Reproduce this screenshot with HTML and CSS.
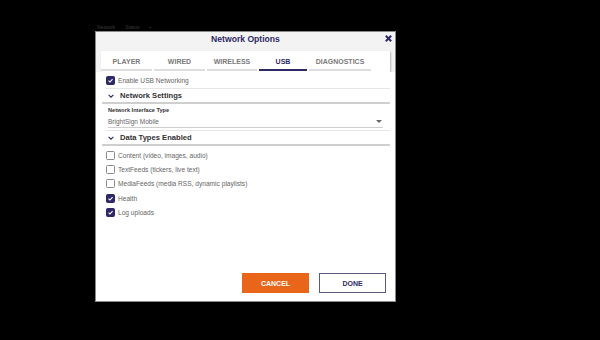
FILE: index.html
```html
<!DOCTYPE html>
<html>
<head>
<meta charset="utf-8">
<link rel="stylesheet" href="styles.css">
</head>
<body>
<div class="backdrop-strip"><span>Network</span><span>Status</span><span>▪</span></div>
<div class="dialog">
  <div class="head">
    <div class="title-row">
      <span class="title">Network Options</span>
      <svg class="close" viewBox="0 0 10 10"><path d="M2 2 L8 8 M8 2 L2 8" /></svg>
    </div>
    <div class="tabs">
      <div class="tab w1">PLAYER</div>
      <div class="tab w1">WIRED</div>
      <div class="tab w2">WIRELESS</div>
      <div class="tab w3 active">USB</div>
      <div class="tab w4">DIAGNOSTICS</div>
    </div>
  </div>
  <div class="content">
    <div class="check-row sep">
      <span class="box checked"><svg viewBox="0 0 10 10"><path d="M2.2 5.2 L4.2 7.2 L7.9 2.9" /></svg></span>
      <span>Enable USB Networking</span>
    </div>
    <div class="section">
      <svg class="chev" viewBox="0 0 10 6"><path d="M1 1 L5 5 L9 1" /></svg>
      <span>Network Settings</span>
    </div>
    <div class="field sep">
      <div class="field-label">Network Interface Type</div>
      <div class="select">
        <span>BrightSign Mobile</span>
        <span class="caret"></span>
      </div>
    </div>
    <div class="section">
      <svg class="chev" viewBox="0 0 10 6"><path d="M1 1 L5 5 L9 1" /></svg>
      <span>Data Types Enabled</span>
    </div>
    <div class="list">
      <div class="check-row"><span class="box"></span><span>Content (video, images, audio)</span></div>
      <div class="check-row"><span class="box"></span><span>TextFeeds (tickers, live text)</span></div>
      <div class="check-row"><span class="box"></span><span>MediaFeeds (media RSS, dynamic playlists)</span></div>
      <div class="check-row"><span class="box checked"><svg viewBox="0 0 10 10"><path d="M2.2 5.2 L4.2 7.2 L7.9 2.9" /></svg></span><span>Health</span></div>
      <div class="check-row"><span class="box checked"><svg viewBox="0 0 10 10"><path d="M2.2 5.2 L4.2 7.2 L7.9 2.9" /></svg></span><span>Log uploads</span></div>
    </div>
  </div>
  <div class="footer">
    <button class="btn cancel">CANCEL</button>
    <button class="btn done">DONE</button>
  </div>
</div>
</body>
</html>
```
FILE: styles.css
```css
html, body {
  margin: 0;
  padding: 0;
  background: #000;
}
body {
  width: 600px;
  height: 340px;
  overflow: hidden;
  padding: 24px 0 0 95px;
  box-sizing: border-box;
  font-family: "Liberation Sans", Arial, sans-serif;
}
.backdrop-strip {
  height: 7px;
  display: flex;
  gap: 10px;
  padding-left: 2px;
  font-size: 5px;
  line-height: 7px;
  color: #3a3a3a;
  overflow: hidden;
}
.dialog {
  width: 299px;
  height: 269px;
  border: 1px solid #8a8a8a;
  background: #fff;
  display: flex;
  flex-direction: column;
}
.head {
  background: #f3f3f3;
}
.title-row {
  height: 19px;
  display: flex;
  align-items: center;
  justify-content: center;
  position: relative;
}
.title {
  font-size: 8.6px;
  font-weight: bold;
  color: #2d2966;
  margin-top: -6px;
}
.close {
  position: absolute;
  right: 2px;
  top: 2px;
  width: 9px;
  height: 9px;
}
.close path {
  fill: none;
  stroke: #2d2966;
  stroke-width: 2.2;
}
.tabs {
  margin: 0 5px;
  height: 21px;
  background: #fff;
  display: flex;
  gap: 2px;
  align-items: stretch;
  box-shadow: 1px 1px 2px rgba(0,0,0,0.25);
  border-radius: 1px;
}
.tab {
  display: flex;
  align-items: center;
  justify-content: center;
  font-size: 7px;
  font-weight: bold;
  color: #7a7a7a;
  border-bottom: 2px solid #dedede;
  margin-bottom: 1px;
  padding-top: 2px;
  box-sizing: border-box;
}
.tab.w1 { width: 51px; }
.tab.w2 { width: 50px; }
.tab.w3 { width: 48px; }
.tab.w4 { width: 62px; }
.tab.active {
  color: #2d2966;
  border-bottom-color: #2d2966;
}
.content {
  padding: 1px 5px 0 10px;
  background: #fff;
}
.check-row {
  display: flex;
  align-items: center;
  gap: 3px;
  font-size: 6.6px;
  color: #666;
  height: 14.4px;
}
.check-row.sep {
  height: 15px;
  border-bottom: 1px solid #e6e6e6;
}
.box {
  width: 7px;
  height: 7px;
  border: 1px solid #8a8a8a;
  border-radius: 1.5px;
  background: #fff;
  display: flex;
  flex: none;
}
.box.checked {
  background: #2d2966;
  border-color: #2d2966;
}
.box svg {
  width: 7px;
  height: 7px;
}
.box svg path {
  fill: none;
  stroke: #fff;
  stroke-width: 1.6;
}
.section {
  height: 13px;
  display: flex;
  align-items: center;
  gap: 6px;
  border-bottom: 2px solid #cfcfcf;
  font-size: 7.6px;
  font-weight: bold;
  color: #333;
  margin-left: -4px;
  padding-left: 6px;
}
.chev {
  width: 6px;
  height: 4px;
}
.chev path {
  fill: none;
  stroke: #2d2966;
  stroke-width: 1.8;
}
.field {
  padding: 2px 7px 2px 2px;
}
.field.sep {
  border-bottom: 1px solid #e6e6e6;
}
.field-label {
  font-size: 5.6px;
  font-weight: bold;
  color: #333;
  height: 8px;
  line-height: 8px;
}
.select {
  display: flex;
  align-items: center;
  justify-content: space-between;
  height: 12px;
  margin-top: 1px;
  border-bottom: 1px solid #cfcfcf;
  font-size: 6.5px;
  color: #666;
}
.caret {
  width: 0;
  height: 0;
  border-left: 3.5px solid transparent;
  border-right: 3.5px solid transparent;
  border-top: 3.5px solid #666;
  margin-right: 1px;
}
.list {
  padding-top: 2px;
}
.footer {
  margin-top: auto;
  display: flex;
  justify-content: flex-end;
  gap: 10px;
  padding: 0 9px 8px 0;
}
.btn {
  width: 67px;
  height: 20px;
  font-family: "Liberation Sans", Arial, sans-serif;
  font-size: 7px;
  font-weight: bold;
  padding: 0;
  border-radius: 0;
  box-sizing: border-box;
}
.btn.cancel {
  background: #e8651a;
  border: none;
  color: #fff;
}
.btn.done {
  background: #fff;
  border: 1px solid #5c5a7a;
  color: #2d2966;
}
```
